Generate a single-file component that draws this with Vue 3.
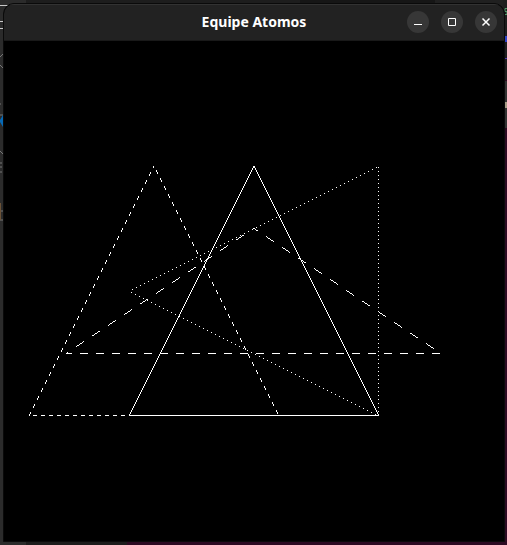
<script setup>
// Each edge is sampled one pixel at a time along its major axis; `on` of every
// `period` pixels are lit, counted from `origin`.
const triangles = [
  {
    name: 'solid',
    edges: [
      { from: [125, 375], to: [250, 125], axis: 'y', on: 1, period: 1, origin: 0 },
      { from: [250, 125], to: [375, 375], axis: 'y', on: 1, period: 1, origin: 0 },
      { from: [125, 374.5], to: [375, 374.5], axis: 'x', on: 1, period: 1, origin: 0 },
    ],
  },
  {
    name: 'short dashes',
    edges: [
      { from: [25, 375], to: [150, 125], axis: 'y', on: 4, period: 8, origin: 131 },
      { from: [150, 125], to: [275, 375], axis: 'y', on: 4, period: 8, origin: 129 },
      { from: [25, 374.5], to: [275, 374.5], axis: 'x', on: 4, period: 8, origin: 29 },
    ],
  },
  {
    name: 'dots',
    edges: [
      { from: [125, 250], to: [375, 125], axis: 'x', on: 1, period: 4, origin: 0 },
      { from: [125, 250], to: [375, 375], axis: 'x', on: 1, period: 4, origin: 3 },
      { from: [374.5, 125], to: [374.5, 375], axis: 'y', on: 1, period: 4, origin: 126 },
    ],
  },
  {
    name: 'long dashes',
    edges: [
      { from: [62, 312.5], to: [249.5, 187.5], axis: 'x', on: 8, period: 16, origin: 72 },
      { from: [250, 187.5], to: [437, 312.5], axis: 'x', on: 8, period: 16, origin: 262 },
      { from: [62, 312.5], to: [437, 312.5], axis: 'x', on: 8, period: 16, origin: 76 },
    ],
  },
]

function rasterize({ from, to, axis, on, period, origin }) {
  const major = axis === 'x' ? 0 : 1
  const minor = 1 - major
  const [a, b] = from[major] < to[major] ? [from, to] : [to, from]
  const slope = (b[minor] - a[minor]) / (b[major] - a[major])
  let d = ''
  for (let m = Math.floor(a[major]); m < b[major]; m++) {
    const phase = (((m - origin) % period) + period) % period
    if (phase >= on) continue
    const n = Math.floor(a[minor] + (m + 0.5 - a[major]) * slope)
    const [x, y] = axis === 'x' ? [m, n] : [n, m]
    d += `M${x} ${y}h1v1h-1z`
  }
  return d
}

const shapes = triangles.map((t) => ({ name: t.name, d: t.edges.map(rasterize).join('') }))
</script>

<template>
  <div class="desktop">
    <svg class="behind left" width="8" height="230" aria-hidden="true">
      <path d="M0 5h8v1h-8zM0 21h3v1h-3zM0 28h3v1h-3z" fill="#c8c8c8" />
      <path d="M0 57l3-3M0 65l3 3M0 151l3 3M0 115h3" stroke="#777" fill="none" />
      <path d="M3 115v12l-3-5v-2z" fill="#0769b5" />
      <path d="M0 104h1M0 163h2M0 167h2M0 172h2M0 211h3M0 220h3" stroke="#777" fill="none" />
      <path d="M0 203h1v17h-1z" fill="#6b5237" />
    </svg>
    <svg class="behind right" width="4" height="130" aria-hidden="true">
      <path d="M0 0h4v80h-4z" fill="#1e1e1e" />
      <path d="M0 81h4v47h-4z" fill="#333" />
      <path d="M4 8.500h-2v3h2v3h-2" stroke="#4f9a68" fill="none" />
      <path d="M2 36h2v6h-2z" fill="#2f43c8" />
      <path d="M2 58h2v1h-2z" fill="#4b35b0" />
      <path d="M2 102h2v6h-2z" fill="#a89c86" />
    </svg>
    <main class="window">
      <header class="titlebar">
        <h1 class="title">Equipe Atomos</h1>
        <div class="controls">
          <button class="control" type="button" aria-label="Minimize">
            <svg width="22" height="22" viewBox="0 0 22 22"><path d="M7 13.5h8" /></svg>
          </button>
          <button class="control" type="button" aria-label="Maximize">
            <svg width="22" height="22" viewBox="0 0 22 22"><path d="M7.5 7.5h7v7h-7z" /></svg>
          </button>
          <button class="control" type="button" aria-label="Close">
            <svg width="22" height="22" viewBox="0 0 22 22"><path class="cross" d="M7.5 7.5l7 7M14.5 7.5l-7 7" /></svg>
          </button>
        </div>
      </header>
      <svg class="canvas" viewBox="0 0 500 500" role="img" aria-label="Four triangles">
        <path v-for="s in shapes" :key="s.name" :d="s.d" />
      </svg>
    </main>
  </div>
</template>

<style>
body {
  margin: 0;
  background: #2c0a22;
}
</style>

<style scoped>
.desktop {
  position: relative;
  box-sizing: border-box;
  min-height: 100vh;
  padding: 3px 2px 3px 3px;
  display: flex;
  background:
    linear-gradient(#2b2b2b, #2b2b2b) 0 0 / 26px 100% no-repeat,
    linear-gradient(#1c1c1c, #1c1c1c) 26px 100% / 101px 3px no-repeat,
    linear-gradient(#1d1d1d, #1d1d1d) 26px 0 / 274px 10px no-repeat,
    linear-gradient(#161616, #161616) 300px 0 / 135px 10px no-repeat,
    linear-gradient(#202020, #202020) 435px 0 / 100% 10px no-repeat,
    #2c0a22;
}

.behind {
  position: absolute;
  top: 0;
}

.left {
  left: 0;
}

.right {
  right: 0;
}

.window {
  position: relative;
  flex: 1;
  min-width: 0;
  display: flex;
  flex-direction: column;
  border: 1px solid #0a0a0a;
  border-radius: 11px 11px 0 0;
  background: #000;
  overflow: hidden;
}

.titlebar {
  box-sizing: border-box;
  height: 37px;
  padding: 0 7px 1px;
  display: grid;
  grid-template-columns: 1fr auto 1fr;
  align-items: center;
  background: #222;
  border-top: 1px solid #323232;
  border-bottom: 1px solid #191919;
}

.title {
  grid-column: 2;
  margin: 0;
  color: #fff;
  font: 700 14px/20px "Noto Sans", "Open Sans", sans-serif;
  white-space: nowrap;
}

.controls {
  display: flex;
  justify-content: flex-end;
  gap: 12px;
}

.control {
  width: 22px;
  height: 22px;
  padding: 0;
  border: 0;
  border-radius: 50%;
  background: #373737;
}

.control svg {
  display: block;
  fill: none;
  stroke: #fff;
  stroke-width: 1;
}

.control .cross {
  stroke-width: 1.5;
}

.canvas {
  display: block;
  width: 100%;
  fill: #fff;
  shape-rendering: crispEdges;
}
</style>
